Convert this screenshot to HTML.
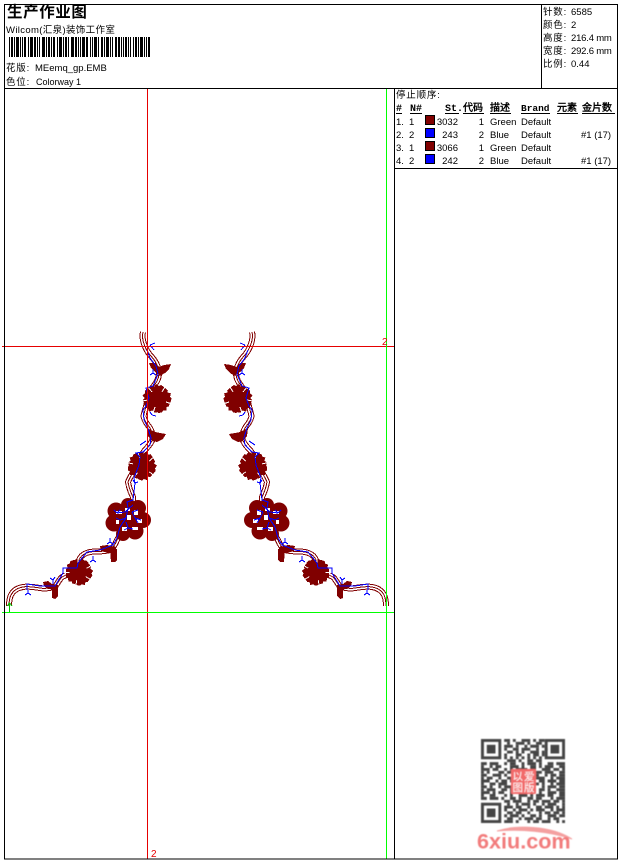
<!DOCTYPE html>
<html><head><meta charset="utf-8"><style>
html,body{margin:0;padding:0;background:#fff;width:620px;height:860px;overflow:hidden}
svg{display:block}
text{font-family:"Liberation Sans","WenQuanYi Zen Hei","Noto Sans CJK SC",sans-serif;font-size:9.5px;fill:#000}
.h{font-family:"Liberation Mono","WenQuanYi Zen Hei",sans-serif;font-weight:bold;font-size:10px}
.r{text-anchor:end}
.s{letter-spacing:.8px}
</style></head><body>
<svg width="620" height="860" viewBox="0 0 620 860" xmlns="http://www.w3.org/2000/svg">
<rect width="620" height="860" fill="#fff"/>
<defs>
<filter id="bl" x="-5%" y="-5%" width="110%" height="110%"><feGaussianBlur stdDeviation="0.45"/></filter>
<path id="st" d="M143,332C141,340 146,350 150,355C155,360 159,367 159,373C159,380 155,384 153,387C150,392 148,395 148,397C147,402 146,407 145,410C144,414 143,416 144,418C145,422 148,425 150,428C152,432 153,435 153,438C152,442 149,446 145,450C141,455 139,460 137,465C134,471 130,477 128,482C129,488 131,493 133,497C133,510 125,528 117,540C115,545 113,548 110,550C104,552 96,551 90,552C85,553 82,555 80,558C78,562 77,566 75,570C71,573 66,575 62,577C59,580 57,584 55,587C50,588 45,589 40,588C33,587 28,586 23,587C17,588 13,591 11,595C9,599 9,603 9,606"/>
<g id="w"><polygon points="0,0 -6,-8 -8,-11 -5,-13 -3,-12 -1,-15 2,-13 4,-14 7,-12 8,-10 5,-7" fill="#800000"/></g>
<g id="fl"><circle r="5" fill="#800000"/><use href="#w"/><use href="#w" transform="rotate(72)"/><use href="#w" transform="rotate(144)"/><use href="#w" transform="rotate(216)"/><use href="#w" transform="rotate(288)"/>
<path d="M5,-7L9,-14M9,3L15,5M-2,8L-4,14M-9,1L-15,2M-5,-7L-9,-12" stroke="#fff" stroke-width="1" fill="none"/></g>
<g id="half">
<g fill="none" shape-rendering="crispEdges">
<use href="#st" stroke="#800000" stroke-width="6"/>
<use href="#st" stroke="#fff" stroke-width="4"/>
<use href="#st" stroke="#800000" stroke-width="1"/>
</g>
<g fill="#800000" shape-rendering="crispEdges">
<polygon points="149,363 155,363 159,367 164,365 171,364 169,369 165,373 160,376 155,372 151,368"/>
<polygon points="147,428 151,430 155,432 160,433 166,434 163,439 157,442 152,441 148,436"/>
<polygon points="100,546 107,545 116,547 116,552 108,553 101,551"/>
<polygon points="110,549 117,549 117,560 115,562 111,562"/>
<polygon points="43,582 48,581 52,584 58,585 58,590 48,589 44,586"/>
<polygon points="52,585 58,585 58,596 55,599 52,598"/>
<use href="#fl" transform="translate(157,399)"/>
<use href="#fl" transform="translate(142,466) rotate(20)"/>
<use href="#fl" transform="translate(79,572) rotate(160) scale(.95)"/>
</g>
<g fill="#800000">
<circle cx="116" cy="511" r="8.5"/><circle cx="128" cy="505" r="7"/><circle cx="138" cy="508" r="8"/><circle cx="143" cy="520" r="8"/><circle cx="135" cy="531" r="8.5"/><circle cx="123" cy="534" r="7"/><circle cx="114" cy="523" r="8.5"/><circle cx="128" cy="519" r="10"/>
</g>
<g fill="#fff" shape-rendering="crispEdges">
<rect x="116" y="511" width="6" height="3"/><rect x="125" y="508" width="5" height="3"/><rect x="134" y="510" width="4" height="5"/><rect x="137" y="519" width="5" height="4"/><rect x="132" y="527" width="6" height="3"/><rect x="122" y="527" width="5" height="4"/><rect x="127" y="515" width="4" height="5"/><rect x="116" y="520" width="3" height="4"/>
</g>
<path fill="none" stroke="#0000ff" shape-rendering="crispEdges" d="M147,350L150,358L156,366L158,374L153,386L146,388L149,398L146,406L143,410L144,420L148,428L151,438L150,445L143,452L136,453L140,457L139,465L134,478L135,483L133,500L127,502L128,508L126,518L120,527L117,538L113,545L100,550L87,552L78,563L77,568L63,568L63,573L55,586L40,586L27,584L27,590
M150,345L155,343M150,345L154,350
M153,373L153,369M153,373L156,375M153,373L150,375
M152,415L156,416M152,415L150,412
M143,443L146,441M143,443L140,445
M135,483L133,480M135,483L138,482
M110,542L107,544M110,542L113,544M110,542L110,538
M93,560L90,562M93,560L96,562M93,560L93,556
M53,580L50,578M53,580L55,577M53,580L53,584
M28,593L25,595M28,593L31,595M28,593L28,590
M133,505L125,512L117,513M117,513L114,510M117,513L120,510M132,512L138,510M132,512L135,518M135,518L141,520M135,518L138,523M126,518L120,520M120,520L116,518M126,522L128,528M128,528L124,530M128,528L133,529"/>
</g>
</defs>

<use href="#half"/>
<use href="#half" transform="translate(395,0) scale(-1,1)"/>

<g shape-rendering="crispEdges">
<path d="M147.5,88V859M2,346.5H394" stroke="#e60000" fill="none"/>
<path d="M386.5,88V859M2,612.5H394" stroke="#00ff00" fill="none"/>
<path d="M9.5,604V612M7,606L9.5,603L12,606" stroke="#00c000" fill="none"/>
<rect x="4.5" y="4.5" width="613" height="854.5" fill="none" stroke="#000"/>
<path d="M4,88.5H618M541.5,4V88M394.5,88V859M394,168.5H618" stroke="#000" fill="none"/>
<path d="M9,47H150" stroke="#000" stroke-width="20" stroke-dasharray="1 1 2 1 1 1 3 1 1 1 1 1 2 2 1 1 3 1 2 1 1 1 1 2 3 1 1 1 2 1 1 1 2 2 1 1 3 1 1 1 2 1 1 2 3 1 2 1 1 1 1 1 3 1 2 2 1 1 1 1 3 1 1 2 2 1 1 1 3 1 1 1 1 2 2 1 2 1 1 1 1 1 2 1 1 1 1 2"/>
</g>

<text x="7" y="17" style="font-size:15.5px;font-weight:bold;letter-spacing:.6px">生产作业图</text>
<text x="6" y="33" style="letter-spacing:.35px">Wilcom(汇泉)装饰工作室</text>
<text x="6" y="71" class="s">花版:</text><text x="35" y="71">MEemq_gp.EMB</text>
<text x="6" y="85" class="s">色位:</text><text x="36" y="85" style="font-size:9px">Colorway 1</text>

<text x="543" y="15" class="s">针数:</text><text x="571" y="15">6585</text>
<text x="543" y="28" class="s">颜色:</text><text x="571" y="28">2</text>
<text x="543" y="41" class="s">高度:</text><text x="571" y="41" style="letter-spacing:-.2px">216.4 mm</text>
<text x="543" y="54" class="s">宽度:</text><text x="571" y="54" style="letter-spacing:-.2px">292.6 mm</text>
<text x="543" y="67" class="s">比例:</text><text x="571" y="67">0.44</text>

<text x="396" y="98" class="s">停止顺序:</text>
<text class="h" x="396" y="111">#</text>
<text class="h" x="410" y="111">N#</text>
<text class="h" x="445" y="111">St.</text>
<text class="h" x="463" y="111">代码</text>
<text class="h" x="490" y="111">描述</text>
<text class="h" x="521" y="111" style="font-size:9.5px">Brand</text>
<text class="h" x="557" y="111">元素</text>
<text class="h" x="582" y="111">金片数</text>
<path d="M396,113.5H402M410,113.5H422M445,113.5H459M463,113.5H484M490,113.5H511M521,113.5H550M557,113.5H578M582,113.5H615" stroke="#000" shape-rendering="crispEdges"/>
<g shape-rendering="crispEdges" stroke="#000">
<rect x="425.5" y="115.5" width="9" height="9" fill="#800000"/>
<rect x="425.5" y="128.5" width="9" height="9" fill="#0000ff"/>
<rect x="425.5" y="141.5" width="9" height="9" fill="#800000"/>
<rect x="425.5" y="154.5" width="9" height="9" fill="#0000ff"/>
</g>
<text x="396" y="125">1.</text><text x="409" y="125">1</text><text class="r" x="458" y="125">3032</text><text class="r" x="484" y="125">1</text><text x="490" y="125">Green</text><text x="521" y="125">Default</text>
<text x="396" y="138">2.</text><text x="409" y="138">2</text><text class="r" x="458" y="138">243</text><text class="r" x="484" y="138">2</text><text x="490" y="138">Blue</text><text x="521" y="138">Default</text><text x="581" y="138">#1 (17)</text>
<text x="396" y="151">3.</text><text x="409" y="151">1</text><text class="r" x="458" y="151">3066</text><text class="r" x="484" y="151">1</text><text x="490" y="151">Green</text><text x="521" y="151">Default</text>
<text x="396" y="164">4.</text><text x="409" y="164">2</text><text class="r" x="458" y="164">242</text><text class="r" x="484" y="164">2</text><text x="490" y="164">Blue</text><text x="521" y="164">Default</text><text x="581" y="164">#1 (17)</text>

<text x="382" y="345" style="fill:#e60000;font-size:10px">2</text>
<text x="151" y="857" style="fill:#e60000;font-size:10px">2</text>

<g filter="url(#bl)">
<svg x="481" y="739" width="84" height="84" viewBox="0 0 29 29">
<g fill="none" stroke="#444" stroke-width="1">
<path d="M0,.5H29" stroke-dasharray="0 8 2 1 1 2 3 1 1 1 2 7"/>
<path d="M0,1.5H29" stroke-dasharray="0 9 1 2 3 1 1 2 2 8"/>
<path d="M0,2.5H29" stroke-dasharray="0 8 3 1 1 2 1 1 3 1 1 7"/>
<path d="M0,3.5H29" stroke-dasharray="0 8 1 2 2 1 3 2 1 2 1 6"/>
<path d="M0,4.5H29" stroke-dasharray="0 9 2 1 1 1 1 2 3 1 1 7"/>
<path d="M0,5.5H29" stroke-dasharray="0 8 1 3 2 2 1 1 2 1 1 7"/>
<path d="M0,6.5H29" stroke-dasharray="0 8 1 1 1 1 1 1 1 1 1 1 1 1 1 8"/>
<path d="M0,7.5H29" stroke-dasharray="0 9 3 1 1 2 2 1 2 8"/>
<path d="M0,8.5H29" stroke-dasharray="2 1 3 2 1 1 2 2 1 1 3 1 1 2 2 1 3"/>
<path d="M0,9.5H29" stroke-dasharray="1 2 1 1 2 3 3 1 1 2 2 1 1 1 3 2 2"/>
<path d="M0,10.5H29" stroke-dasharray="3 1 2 2 1 1 1 1 4 1 2 2 3 1 2 1 1"/>
<path d="M0,11.5H29" stroke-dasharray="1 1 1 3 2 1 2 2 2 2 1 1 2 1 3 2 2"/>
<path d="M0,12.5H29" stroke-dasharray="2 2 3 1 1 2 2 1 3 1 2 2 1 1 2 1 2"/>
<path d="M0,13.5H29" stroke-dasharray="1 1 2 2 1 2 3 1 1 3 1 1 3 2 1 1 3"/>
<path d="M0,14.5H29" stroke-dasharray="3 2 1 1 2 1 1 3 2 1 1 2 2 1 3 1 2"/>
<path d="M0,15.5H29" stroke-dasharray="1 2 2 1 3 2 1 1 3 2 2 1 1 2 1 1 3"/>
<path d="M0,16.5H29" stroke-dasharray="2 1 1 2 1 1 4 2 1 1 2 3 1 1 3 1 2"/>
<path d="M0,17.5H29" stroke-dasharray="1 1 3 2 2 1 1 1 2 2 3 1 2 1 1 2 3"/>
<path d="M0,18.5H29" stroke-dasharray="3 1 1 1 2 2 3 1 1 1 2 2 1 2 3 1 2"/>
<path d="M0,19.5H29" stroke-dasharray="1 2 2 3 1 1 1 2 3 1 1 1 3 1 2 2 2"/>
<path d="M0,20.5H29" stroke-dasharray="2 1 3 1 1 2 2 1 1 2 2 1 2 3 1 1 3"/>
<path d="M0,21.5H29" stroke-dasharray="0 8 2 1 3 2 1 1 2 1 3 1 2 1 1"/>
<path d="M0,22.5H29" stroke-dasharray="0 9 1 2 1 1 3 1 1 2 1 1 3 2 1"/>
<path d="M0,23.5H29" stroke-dasharray="0 8 3 1 2 2 1 2 2 1 3 1 1 1 1"/>
<path d="M0,24.5H29" stroke-dasharray="0 8 1 2 1 1 3 1 1 1 3 2 1 1 3"/>
<path d="M0,25.5H29" stroke-dasharray="0 9 2 1 2 2 1 3 1 1 2 1 2 1 1"/>
<path d="M0,26.5H29" stroke-dasharray="0 8 1 1 3 1 1 2 2 1 1 2 3 1 2"/>
<path d="M0,27.5H29" stroke-dasharray="0 9 2 2 1 1 3 1 2 2 1 1 2 2"/>
<path d="M0,28.5H29" stroke-dasharray="0 8 3 1 1 3 1 1 2 1 3 2 1 1 1"/>
</g>
<g fill="none" stroke="#444">
<rect x=".5" y=".5" width="6" height="6"/><rect x="22.5" y=".5" width="6" height="6"/><rect x=".5" y="22.5" width="6" height="6"/>
</g>
<g fill="#444"><rect x="2" y="2" width="3" height="3"/><rect x="24" y="2" width="3" height="3"/><rect x="2" y="24" width="3" height="3"/></g>
</svg>
<rect x="511" y="769" width="25" height="25" rx="1" fill="#f26a6a"/>
<text x="512.5" y="780" style="fill:#fff;font-size:10.5px">以</text><text x="524" y="780" style="fill:#fff;font-size:10.5px">爱</text>
<text x="512.5" y="791" style="fill:#fff;font-size:10.5px">图</text><text x="524" y="791" style="fill:#fff;font-size:10.5px">版</text>
<path d="M497,831C515,825 550,825 572,839C548,831 520,829 497,831Z" fill="#f4a0a0" stroke="#f4a0a0" stroke-width="1"/>
<text x="477" y="848.5" style="font-size:21.6px;font-weight:bold;fill:#f27c7c">6xiu.com</text>
</g>
</svg>
</body></html>
